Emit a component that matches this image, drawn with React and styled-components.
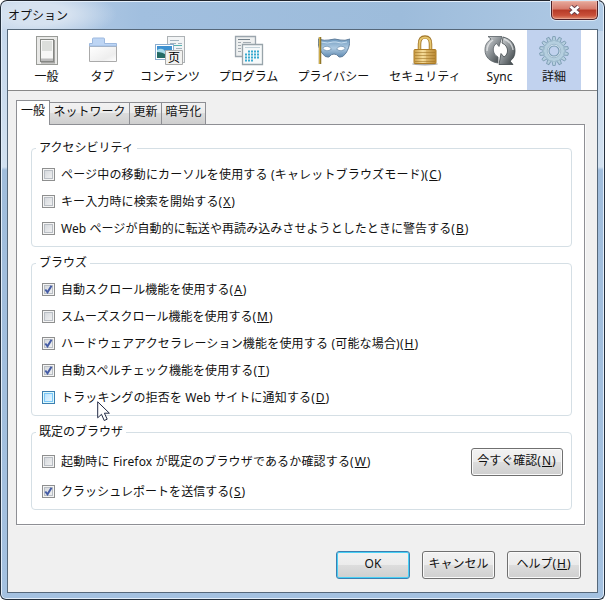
import React from "react";
import styled, { createGlobalStyle, css } from "styled-components";

const Global = createGlobalStyle`
  *{box-sizing:border-box}
  html,body{margin:0;padding:0;background:#fff}
  body{font:12px/16px "Noto Sans","Noto Sans CJK JP",sans-serif;color:#111;overflow:hidden}
`;

const Window = styled.div`
  width: 605px;
  height: 600px;
  padding: 1px 6px 6px;
  border: 1px solid #25303d;
  border-top-color: #20242c;
  border-radius: 7px 7px 6px 6px;
  box-shadow: inset 0 0 0 1px #e3eefa;
  background:
    radial-gradient(ellipse 80px 26px at 36px 13px, #d6e2f0 40%, #d6e2f000 100%) 0 0 / 100% 30px no-repeat,
    linear-gradient(90deg, #bfd2e9 0, #a1bfdf 140px, #9dbcdb 400px, #b0cae5 100%) 0 0 / 100% 30px no-repeat,
    linear-gradient(#c3d6eb 0, #d2e1f0 166px, #a0bddc 169px, #a4c1e0 100%);
`;

const TitleBar = styled.header`
  display: flex;
  justify-content: space-between;
  height: 27px;
  padding: 5px 0 0 1px;
  line-height: 17px;
`;

const Close = styled.button`
  display: grid;
  place-items: center;
  width: 47px;
  height: 19px;
  margin-top: -6px;
  padding: 0 0 1px;
  border: 1px solid #4d2027;
  border-top: 0;
  border-radius: 0 0 5px 5px;
  background: linear-gradient(#e6aa9d 0, #d6796a 45%, #b63a27 50%, #c9503a 80%, #e08e70 100%);
  box-shadow: inset 0 0 0 1px #f0b9ab99, 0 0 0 1px #d9e7f5;
`;

const Client = styled.main`
  height: 564px;
  border: 1px solid #56687a;
  background: #f0f0f0;
`;

const Toolbar = styled.nav`
  display: flex;
  height: 61px;
  padding-left: 12px;
  background: #fff;
  border-bottom: 1px solid #888;
`;

const Category = styled.div`
  display: flex;
  flex-direction: column;
  align-items: center;
  flex: none;
  width: ${(p) => p.$w}px;
  padding-top: 4px;
  background: ${(p) => (p.$active ? "#c1d2ee" : "transparent")};
  svg { display: block; height: 32px; width: 32px; margin-bottom: 3px; }
`;

const TabStrip = styled.div`
  display: flex;
  align-items: flex-end;
  height: 33px;
  padding-left: 8px;
`;

const Tab = styled.div`
  width: ${(p) => p.$w}px;
  height: 22px;
  padding-top: 1px;
  text-align: center;
  border: 1px solid #8e8f94;
  border-left-width: ${(p) => (p.$first ? 0 : 1)}px;
  border-bottom: 0;
  margin-left: ${(p) => (p.$first ? 0 : -1)}px;
  background: linear-gradient(#f2f2f2 0, #ebebeb 49%, #dcdcdc 50%, #cfcfcf 100%);
  ${(p) => p.$active && css`
    position: relative;
    z-index: 1;
    height: 25px;
    padding-top: 2px;
    margin: 0 0 -1px;
    border-left-width: 1px;
    background: #fff;
  `}
`;

const Panel = styled.section`
  width: 569px;
  height: 401px;
  margin-left: 8px;
  padding: 15px 12px 0 14px;
  border: 1px solid #8e8f94;
  background: #fff;
  box-shadow: 1px 1px 0 #fafafa;
`;

const Group = styled.section`
  height: ${(p) => p.$h}px;
  margin: 8px 0 0;
  padding: 0 8px 0 10px;
  border: 1px solid #d5dfe5;
  border-radius: 4px;
  & + & { margin-top: ${(p) => p.$gap}px; }
`;

const Legend = styled.h2`
  width: fit-content;
  height: 16px;
  margin: -9px 0 5px -6px;
  padding: 0 3px;
  font: inherit;
  background: #fff;
`;

const Row = styled.div`
  display: flex;
  align-items: center;
  justify-content: space-between;
  height: ${(p) => p.$h || 27}px;
`;

const Check = styled.label`
  display: flex;
  align-items: center;
  gap: 6px;
  white-space: pre;
`;

const Box = styled.span`
  display: grid;
  place-items: center;
  width: 13px;
  height: 13px;
  border: 1px solid ${(p) => (p.$hot ? "#3c7fb1" : "#8e8f8f")};
  box-shadow: inset 0 0 0 1px ${(p) => (p.$hot ? "#def9fa" : "#f4f4f4")}, inset 0 0 0 2px ${(p) => (p.$hot ? "#79c6f9" : "#b9bec4")};
  background: ${(p) => p.$hot ? "linear-gradient(135deg,#b1dffd,#f0faff)" : "linear-gradient(135deg,#cfd3d8,#f6f6f6)"};
`;

const Caption = styled.span`
  letter-spacing: ${(p) => p.$track || 0}px;
`;

const KeyHint = styled.span`
  letter-spacing: 1px;
  u {
    text-underline-offset: 1px;
    text-decoration-thickness: 1px;
    text-decoration-skip-ink: none;
  }
`;

const Button = styled.button`
  width: ${(p) => p.$w}px;
  height: 28px;
  padding: 0 0 2px;
  font: inherit;
  color: #111;
  white-space: nowrap;
  border: 1px solid ${(p) => (p.$primary ? "#3c7fb1" : "#707070")};
  border-radius: 3px;
  background: linear-gradient(#f2f2f2 0, #ebebeb 49%, #dddddd 50%, #cfcfcf 100%);
  box-shadow: inset 0 0 0 1px ${(p) => (p.$primary ? "#48d0f5" : "#fafafa")};
`;

const Footer = styled.footer`
  display: flex;
  justify-content: flex-end;
  gap: 12px;
  padding: 26px 16px 0 0;
`;

const Pointer = styled.svg`
  position: absolute;
  left: 97px;
  top: 401px;
`;

const SwitchIcon = () => (
  <svg viewBox="0 0 32 32">
    <rect x="5.5" y="2.5" width="21" height="28" fill="#e9e9e7" stroke="#999b97" />
    <rect x="10" y="6" width="14" height="23.500" fill="#a5a5a3" />
    <rect x="9.500" y="5.500" width="13" height="22" fill="#f7f7f6" stroke="#858783" />
    <path d="M11 7h10v10H11z" fill="#dcdedb" /><path d="M10 24.500h12V27H10z" fill="#bbb" />
  </svg>
);
const TabIcon = () => (
  <svg viewBox="0 0 32 32">
    <defs><linearGradient id="tb" x2="1" y2="1"><stop stopColor="#fff" /><stop offset=".7" stopColor="#eee" /><stop offset="1" stopColor="#fff" /></linearGradient></defs>
    <path d="M2.5 13V9.5h3V5q0-1 1-1h10q1 0 1 1v4.500h12V13z" fill="#bdd5f4" stroke="#9db9df" />
    <path d="M2.500 12.500h27v15h-27z" fill="url(#tb)" stroke="#aaa" />
    <path d="M3 12h26" stroke="#9dbde7" />
  </svg>
);
const ContentIcon = () => (
  <svg viewBox="0 0 32 32">
    <rect x="13.500" y="2.500" width="17" height="26" fill="#f2f4f5" stroke="#adb2b5" />
    <path d="M16 6.500h9M16 9.500h6M24 9.500h4M22 14.500h6" stroke="#a3b3bf" />
    <path d="M19 11.500h9" stroke="#59b3b1" />
    <rect x="1.500" y="10.500" width="18" height="15" fill="#fff" stroke="#8caed0" />
    <path d="M3 12h15v12H3z" fill="#3e91d1" /><path d="M3 16q5-3 8 1t7-1v8H3z" fill="#a7dbea" />
    <path d="M3 18q6 0 9 3l6-1v4H3z" fill="#246b65" />
    <path d="M11.500 16.500h17v14h-17z" fill="#f2f2f0" stroke="#a9aaaa" />
    <text x="14" y="28" fontFamily="Noto Sans CJK SC" fontSize="12">页</text>
  </svg>
);
const ProgramIcon = () => (
  <svg viewBox="0 0 32 32">
    <path d="M2.500 2.500h20v20h-20z" fill="#eef0f0" stroke="#9ba5ad" strokeWidth="1.300" />
    <path d="M5 5.500h12" stroke="#73808a" /><path d="M5 8.500h3m2 0h8M5 11.500h3m2 0h6M5 14.500h3M5 17.500h3" stroke="#a3abb1" />
    <path d="M9.500 10.500h20v20h-20z" fill="#f6f9fa" stroke="#98a4aa" strokeWidth="1.300" />
    <path d="M12 13.500h15" stroke="#c3d3da" />
    <path d="M15 17.500h12M12 20.500h15M12 23.500h15M12 26.500h9" stroke="#38aacf" strokeWidth="2" strokeDasharray="2 1" />
  </svg>
);
const MaskIcon = () => (
  <svg viewBox="0 0 32 32">
    <defs><linearGradient id="mk" x2="0" y2="1"><stop stopColor="#6e98bd" /><stop offset=".5" stopColor="#aecae2" /><stop offset="1" stopColor="#5e89b0" /></linearGradient></defs>
    <path d="M0 5q7 2 11 1 6-2 11 0 5 1 10-1c0 6-2 11-4 14q-3 5-7 4-2-3-5-3t-5 3q-4 1-7-4C1 15 0 11 0 5z" fill="url(#mk)" stroke="#64819e" />
    <path d="M3 8q7 2 12 0h3q5 2 11 0" fill="none" stroke="#c6ddef" />
    <path d="M4.500 14q5-4 9 1-5 4-9-1zm14 1q4-5 9-1-4 5-9 1z" fill="#fff" stroke="#688baa" strokeWidth=".7" />
    <path d="M2 3v27" stroke="#826820" strokeWidth="2.500" /><path d="M1.700 3v27" stroke="#dfbd53" />
  </svg>
);
const LockIcon = () => (
  <svg viewBox="0 0 32 32">
    <defs><linearGradient id="lk" x2="1"><stop stopColor="#c99c45" /><stop offset=".4" stopColor="#f6dc99" /><stop offset="1" stopColor="#bd8c36" /></linearGradient></defs>
    <path d="M10.500 17V10q0-7 5.500-7t5.500 7v7" fill="none" stroke="#a07528" strokeWidth="3.500" />
    <path d="M10.500 17V10q0-6.500 5.500-6.500t5.500 6.500v7" fill="none" stroke="#e6c66f" strokeWidth="1.800" />
    <ellipse cx="16" cy="30" rx="13" ry="1.500" fill="#aaa" />
    <rect x="5" y="15.500" width="22" height="14" rx="1" fill="url(#lk)" stroke="#ad7c25" />
    <path d="M6 18.500h20M6 21.500h20M6 24.500h20M6 27.500h20" stroke="#9e7428" strokeOpacity=".6" />
    <path d="M17 16h9v13h-9z" fill="#ad781c" opacity=".2" />
  </svg>
);
const SyncIcon = () => (
  <svg viewBox="0 0 32 32">
    <defs><linearGradient id="sy" x2="1" y2="1"><stop stopColor="#e0e2e4" /><stop offset=".45" stopColor="#90969a" /><stop offset="1" stopColor="#343b3e" /></linearGradient></defs>
    <path d="M14 29C6 28 1 23 1 16 1 11 3 8 7 5L4 2.500h14l-3 10-2.500-3C8 12 8 20 14 23z" fill="url(#sy)" stroke="#596166" strokeWidth=".8" />
    <path d="M19 3c8 2 12 7 12 14 0 5-2 8-5 10l3 3.500H15l2-11 3 3.500c5-3 5-11-2-14z" fill="url(#sy)" stroke="#3f464a" strokeWidth=".8" />
    <path d="M3 17Q3 10 9 6M20 5q8 3 9 11" fill="none" stroke="#eceeef" opacity=".7" strokeWidth="1.500" />
  </svg>
);
const GearIcon = () => (
  <svg viewBox="0 0 32 32">
    <g transform="translate(16 17)" stroke="#7f9fb5" fill="#b5cfdf" strokeWidth=".9">
      {Array.from({ length: 14 }, (_, i) => <path key={i} d="M-1.900-10-1.200-14.500h2.400L1.900-10z" transform={`rotate(${i * 360 / 14})`} />)}
      <circle r="10.600" /><circle r="10.600" fill="none" stroke="#a8c4d5" />
      <circle r="6.800" fill="#d4e3ef" stroke="#9bb7ca" /><circle r="5" fill="#c1d2ee" stroke="#789bb2" strokeWidth="1.100" />
    </g>
  </svg>
);

const categories = [
  ["一般", 53, SwitchIcon], ["タブ", 59, TabIcon], ["コンテンツ", 76, ContentIcon],
  ["プログラム", 81, ProgramIcon], ["プライバシー", 89, MaskIcon], ["セキュリティ", 94, LockIcon],
  ["Sync", 55, SyncIcon], ["詳細", 54, GearIcon],
];

const AccessKey = ({ k }) => <KeyHint>(<u>{k}</u>)</KeyHint>;

function Option({ text, k, checked, hot, track }) {
  return (
    <Check>
      <Box $hot={hot}>
        {checked && <svg width="9" height="9" viewBox="0 0 9 9"><path d="M1.300 4.500 3.500 7.300 7.500.8" fill="none" stroke="#455ca5" strokeWidth="2" /></svg>}
      </Box>
      <Caption $track={track}>{text}<AccessKey k={k} /></Caption>
    </Check>
  );
}

export default function App() {
  return (
    <>
      <Global />
      <Window>
        <TitleBar>
          <span>オプション</span>
          <Close aria-label="閉じる">
            <svg width="13" height="10" viewBox="0 0 13 10"><path d="M2.500 1.500 10.500 8.500M10.500 1.500 2.500 8.500" stroke="#63404a" strokeWidth="4.500" /><path d="M2.500 1.500 10.500 8.500M10.500 1.500 2.500 8.500" stroke="#fff" strokeWidth="2.700" /></svg>
          </Close>
        </TitleBar>
        <Client>
          <Toolbar>
            {categories.map(([name, w, Icon]) => (
              <Category key={name} $w={w} $active={name === "詳細"}><Icon /><span>{name}</span></Category>
            ))}
          </Toolbar>
          <TabStrip>
            <Tab $w={34} $active>一般</Tab>
            <Tab $w={80} $first>ネットワーク</Tab>
            <Tab $w={33}>更新</Tab>
            <Tab $w={45}>暗号化</Tab>
          </TabStrip>
          <Panel>
            <Group $h={99}>
              <Legend>アクセシビリティ</Legend>
              <Row><Option text="ページ中の移動にカーソルを使用する (キャレットブラウズモード)" k="C" track={0.17} /></Row>
              <Row><Option text="キー入力時に検索を開始する" k="X" track={0.12} /></Row>
              <Row><Option text="Web ページが自動的に転送や再読み込みさせようとしたときに警告する" k="B" track={0.07} /></Row>
            </Group>
            <Group $h={153} $gap={16}>
              <Legend>ブラウズ</Legend>
              <Row><Option text="自動スクロール機能を使用する" k="A" checked track={0.04} /></Row>
              <Row><Option text="スムーズスクロール機能を使用する" k="M" /></Row>
              <Row><Option text="ハードウェアアクセラレーション機能を使用する (可能な場合)" k="H" checked track={0.18} /></Row>
              <Row><Option text="自動スペルチェック機能を使用する" k="T" checked track={0.08} /></Row>
              <Row><Option text="トラッキングの拒否を Web サイトに通知する" k="D" hot track={0.14} /></Row>
            </Group>
            <Group $h={78} $gap={16}>
              <Legend>既定のブラウザ</Legend>
              <Row $h={33}><Option text="起動時に Firefox が既定のブラウザであるか確認する" k="W" track={0.16} /><Button $w={92}>今すぐ確認<AccessKey k="N" /></Button></Row>
              <Row $h={27}><Option text="クラッシュレポートを送信する" k="S" checked track={0.04} /></Row>
            </Group>
          </Panel>
          <Footer>
            <Button $w={74} $primary>OK</Button>
            <Button $w={73}>キャンセル</Button>
            <Button $w={74}>ヘルプ<AccessKey k="H" /></Button>
          </Footer>
        </Client>
      </Window>
      <Pointer width="14" height="22" viewBox="0 0 14 22"><path d="M.7.8v16l3.800-3.500 2.700 6.200 3-1.300-2.800-6h5z" fill="#fff" stroke="#222b45" /></Pointer>
    </>
  );
}
